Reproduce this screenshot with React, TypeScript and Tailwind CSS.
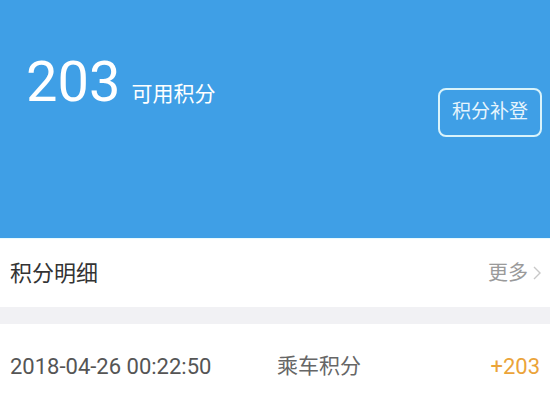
export default function App() {
  const cjk = { fontFamily: 'Roboto, "Noto Sans CJK SC", sans-serif' };
  return (
    <div className="w-[550px] h-[407px] overflow-hidden bg-white" style={cjk}>
      <div className="h-[238px] bg-[#3f9fe6] flex items-start justify-between pl-[26px] pr-[8px] pt-[50px]">
        <div className="flex items-baseline">
          <span className="text-[56px] leading-[64px] font-normal text-white">203</span>
          <span className="ml-[11px] text-[21px] text-white">可用积分</span>
        </div>
        <div className="mt-[38px] w-[104px] h-[49px] rounded-[8px] border-2 border-[#d9f3fb] flex items-center justify-center text-[19px] text-[#e6f5fd]">
          积分补登
        </div>
      </div>
      <div className="h-[69px] flex items-center justify-between pl-[10px] pr-[8px] border-t border-[#e8fbff]">
        <span className="text-[22px] text-[#333333]">积分明细</span>
        <div className="flex items-center text-[20px] text-[#9a9a9a]">
          <span>更多</span>
          <svg width="10" height="16" viewBox="0 0 10 16" className="ml-[4px]">
            <path d="M2 2 L8 8 L2 14" fill="none" stroke="#c8c8c8" strokeWidth="1.4" />
          </svg>
        </div>
      </div>
      <div className="h-[17px] bg-[#f1f1f4]" />
      <div className="h-[85px] flex items-center pl-[10px] pr-[10px]">
        <span className="w-[267px] text-[22px] text-[#555555]">2018-04-26 00:22:50</span>
        <span className="text-[21px] text-[#666666]">乘车积分</span>
        <span className="ml-auto text-[22px] text-[#eba43a]">+203</span>
      </div>
    </div>
  );
}
